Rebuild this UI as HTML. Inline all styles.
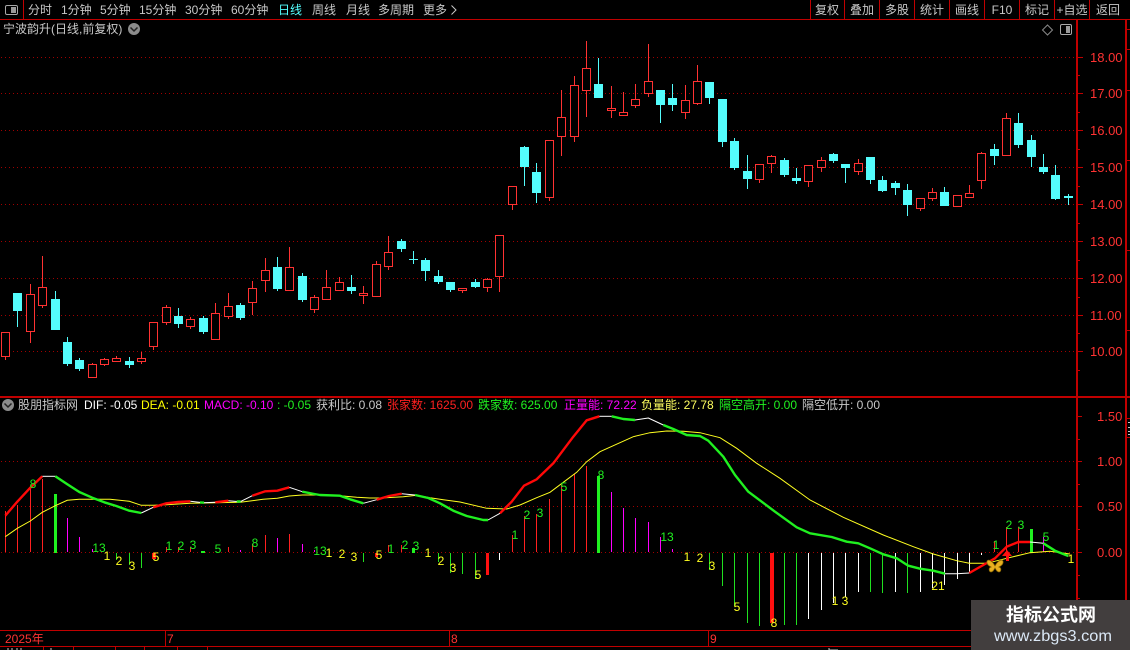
<!DOCTYPE html>
<html><head><meta charset="utf-8"><title>宁波韵升</title>
<style>
html,body{margin:0;padding:0;background:#000;width:1130px;height:650px;overflow:hidden}
svg{display:block}
text{font-family:"Liberation Sans","WenQuanYi Zen Hei","Noto Sans CJK SC",sans-serif;font-size:12px}
.n text{font-size:12px}
</style></head><body>
<svg xmlns="http://www.w3.org/2000/svg" width="1130" height="650" viewBox="0 0 1130 650">
<rect width="1130" height="650" fill="#000"/>
<!-- grid -->
<g stroke="#a00000" stroke-dasharray="1 3" fill="none" shape-rendering="crispEdges">
<path d="M1 57.5H1076M1 93.5H1076M1 130.5H1076M1 167.5H1076M1 204.5H1076M1 241.5H1076M1 278.5H1076M1 315.5H1076M1 351.5H1076M1 461.5H1076M1 506.5H1076M1 552.5H1076"/>
</g>
<!-- frame -->
<g fill="#c00000" shape-rendering="crispEdges">
<rect x="0" y="19" width="1130" height="1"/>
<rect x="23" y="0" width="1" height="19"/>
<rect x="810" y="0" width="1" height="19"/><rect x="844" y="0" width="1" height="19"/><rect x="879" y="0" width="1" height="19"/><rect x="914" y="0" width="1" height="19"/><rect x="949" y="0" width="1" height="19"/><rect x="984" y="0" width="1" height="19"/><rect x="1019" y="0" width="1" height="19"/><rect x="1054" y="0" width="1" height="19"/><rect x="1089" y="0" width="1" height="19"/>
<rect x="1076" y="20" width="2" height="610"/>
<rect x="1125" y="20" width="2" height="610"/>
<rect x="0" y="396" width="1130" height="2"/>
<rect x="0" y="630" width="1130" height="1"/>
<rect x="0" y="646" width="1130" height="1"/>
<rect x="165" y="631" width="1" height="15"/><rect x="449" y="631" width="1" height="15"/><rect x="708" y="631" width="1" height="15"/>
<rect x="43" y="647" width="1" height="3"/><rect x="73" y="647" width="1" height="3"/><rect x="115" y="647" width="1" height="3"/><rect x="144" y="647" width="1" height="3"/><rect x="177" y="647" width="1" height="3"/><rect x="207" y="647" width="1" height="3"/>
<!-- major ticks -->
<rect x="1078" y="57" width="5" height="1"/><rect x="1078" y="93" width="5" height="1"/><rect x="1078" y="130" width="5" height="1"/><rect x="1078" y="167" width="5" height="1"/><rect x="1078" y="204" width="5" height="1"/><rect x="1078" y="241" width="5" height="1"/><rect x="1078" y="278" width="5" height="1"/><rect x="1078" y="315" width="5" height="1"/><rect x="1078" y="351" width="5" height="1"/>
<rect x="1078" y="75" width="2" height="1"/><rect x="1078" y="112" width="2" height="1"/><rect x="1078" y="149" width="2" height="1"/><rect x="1078" y="186" width="2" height="1"/><rect x="1078" y="223" width="2" height="1"/><rect x="1078" y="260" width="2" height="1"/><rect x="1078" y="297" width="2" height="1"/><rect x="1078" y="333" width="2" height="1"/><rect x="1078" y="370" width="2" height="1"/>
<rect x="1078" y="416" width="4" height="1"/><rect x="1078" y="461" width="4" height="1"/><rect x="1078" y="506" width="4" height="1"/><rect x="1078" y="552" width="4" height="1"/>
<rect x="1078" y="439" width="2" height="1"/><rect x="1078" y="484" width="2" height="1"/><rect x="1078" y="529" width="2" height="1"/><rect x="1078" y="575" width="2" height="1"/><rect x="1078" y="598" width="2" height="1"/>
<rect x="1127" y="29" width="3" height="1"/><rect x="1127" y="49" width="3" height="1"/><rect x="1127" y="90" width="3" height="1"/><rect x="1127" y="160" width="3" height="1"/><rect x="1127" y="250" width="3" height="1"/><rect x="1127" y="330" width="3" height="1"/>
<rect x="1127" y="418" width="3" height="1"/><rect x="1127" y="437" width="3" height="1"/>
</g>
<g fill="#c8c8c8" shape-rendering="crispEdges"><rect x="1128" y="422" width="2" height="1"/><rect x="1128" y="427" width="2" height="1"/><rect x="1128" y="431" width="2" height="1"/><rect x="1128" y="434" width="2" height="1"/></g>

<!-- toolbar -->
<rect x="5.5" y="5.5" width="12" height="9" rx="1.5" fill="#000" stroke="#a8a8a8"/><rect x="11" y="7" width="5" height="6" fill="#9a9a9a"/>
<g fill="#c8c8c8">
<text x="28" y="14">分时</text><text x="61" y="14">1分钟</text><text x="100" y="14">5分钟</text><text x="139" y="14">15分钟</text><text x="185" y="14">30分钟</text><text x="231" y="14">60分钟</text>
<text x="278" y="14" fill="#54ffff">日线</text><text x="312" y="14">周线</text><text x="346" y="14">月线</text><text x="378" y="14">多周期</text><text x="423" y="14">更多</text>
</g>
<path d="M451.5 5.5L456 10L451.5 14.5" fill="none" stroke="#c8c8c8"/>
<g fill="#c8c8c8" text-anchor="middle">
<text x="827" y="14">复权</text><text x="862" y="14">叠加</text><text x="897" y="14">多股</text><text x="932" y="14">统计</text><text x="967" y="14">画线</text><text x="1002" y="14">F10</text><text x="1037" y="14">标记</text><text x="1072" y="14">+自选</text><text x="1108" y="14">返回</text>
</g>
<text x="3" y="33" fill="#c8c8c8">宁波韵升(日线,前复权)</text>
<circle cx="134" cy="29" r="6" fill="#8c8c8c"/><path d="M130.5 27.5L134 31L137.5 27.5" fill="none" stroke="#222" stroke-width="1.5"/>
<path d="M1047.5 25L1052.5 30L1047.5 35L1042.5 30Z" fill="none" stroke="#8a8a8a"/>
<rect x="1060.5" y="24.5" width="11" height="10" rx="1.5" fill="#000" stroke="#a8a8a8"/><rect x="1066" y="26" width="4" height="7" fill="#9a9a9a"/>

<!-- red candles -->
<g stroke="#ff3232" fill="none" shape-rendering="crispEdges">
<path d="M5.5 332V360M30.5 284V343M42.5 256V308M92.5 363V378M104.5 358V366M116.5 356V362M141.5 352V364M153.5 322V350M166.5 305V325M190.5 317V329M215.5 303V340M228.5 293V319M252.5 281V315M265.5 258V292M289.5 247V291M314.5 295V313M326.5 270V300M339.5 277V291M363.5 286V304M376.5 261V297M388.5 236V270M462.5 288V293M487.5 278V292M499.5 235V292M512.5 186V210M549.5 140V201M561.5 90V156M574.5 76V142M586.5 41V117M611.5 86V118M623.5 92V116M635.5 84V108M648.5 44V97M685.5 85V119M697.5 65V105M759.5 164V183M771.5 155V173M808.5 165V187M821.5 157V172M858.5 159V175M920.5 198V211M932.5 188V201M957.5 195V206M969.5 185V197M981.5 152V189M1006.5 113V155"/>
<path fill="#000" d="M1.5 332.5h8V356.5h-8zM26.5 294.5h8V331.5h-8zM38.5 287.5h8V305.5h-8zM88.5 364.5h8V377.5h-8zM100.5 359.5h8V364.5h-8zM112.5 358.5h8V361.5h-8zM137.5 358.5h8V361.5h-8zM149.5 322.5h8V346.5h-8zM162.5 307.5h8V322.5h-8zM186.5 319.5h8V326.5h-8zM211.5 313.5h8V339.5h-8zM224.5 306.5h8V316.5h-8zM248.5 288.5h8V302.5h-8zM261.5 270.5h8V280.5h-8zM285.5 267.5h8V290.5h-8zM310.5 297.5h8V309.5h-8zM322.5 287.5h8V299.5h-8zM335.5 282.5h8V290.5h-8zM359.5 293.5h8V295.5h-8zM372.5 264.5h8V296.5h-8zM384.5 252.5h8V266.5h-8zM458.5 288.5h8V290.5h-8zM483.5 279.5h8V287.5h-8zM495.5 235.5h8V276.5h-8zM508.5 186.5h8V204.5h-8zM545.5 140.5h8V197.5h-8zM557.5 117.5h8V136.5h-8zM570.5 85.5h8V136.5h-8zM582.5 68.5h8V90.5h-8zM607.5 108.5h8V110.5h-8zM619.5 112.5h8V115.5h-8zM631.5 99.5h8V105.5h-8zM644.5 81.5h8V93.5h-8zM681.5 100.5h8V112.5h-8zM693.5 81.5h8V103.5h-8zM755.5 164.5h8V179.5h-8zM767.5 156.5h8V163.5h-8zM804.5 165.5h8V181.5h-8zM817.5 160.5h8V167.5h-8zM854.5 163.5h8V171.5h-8zM916.5 198.5h8V208.5h-8zM928.5 192.5h8V198.5h-8zM953.5 195.5h8V206.5h-8zM965.5 193.5h8V197.5h-8zM977.5 153.5h8V180.5h-8zM1002.5 118.5h8V155.5h-8z"/>
</g>
<!-- cyan candles -->
<g stroke="#54fcfc" fill="none" shape-rendering="crispEdges">
<path d="M17.5 293V327M55.5 291V330M67.5 337V366M79.5 358V371M129.5 357V368M178.5 308V328M203.5 316V334M240.5 303V320M277.5 257V291M302.5 273V302M351.5 275V294M401.5 239V252M413.5 251V264M409 259.5H418M425.5 258V281M438.5 270V284M450.5 282V292M475.5 279V288M524.5 146V186M536.5 163V203M598.5 58V98M660.5 90V123M672.5 84V111M709.5 82V104M722.5 99V147M734.5 138V170M747.5 155V189M784.5 158V177M796.5 168V184M833.5 153V163M845.5 164V183M870.5 157V184M882.5 176V192M895.5 181V195M907.5 184V216M944.5 187V206M994.5 144V165M1018.5 113V148M1031.5 135V167M1043.5 154V174M1055.5 165V200M1068.5 194V205"/>
</g>
<path fill="#54fcfc" shape-rendering="crispEdges" d="M13 293h9V311h-9zM51 299h9V330h-9zM63 342h9V364h-9zM75 360h9V369h-9zM125 361h9V365h-9zM174 316h9V324h-9zM199 318h9V332h-9zM236 305h9V318h-9zM273 267h9V289h-9zM298 276h9V300h-9zM347 287h9V291h-9zM397 241h9V249h-9zM421 260h9V271h-9zM434 276h9V282h-9zM446 282h9V290h-9zM471 282h9V287h-9zM520 147h9V167h-9zM532 172h9V193h-9zM594 84h9V98h-9zM656 90h9V105h-9zM668 98h9V105h-9zM705 82h9V98h-9zM718 99h9V142h-9zM730 141h9V168h-9zM743 171h9V179h-9zM780 160h9V175h-9zM792 178h9V181h-9zM829 154h9V161h-9zM841 164h9V168h-9zM866 157h9V180h-9zM878 180h9V191h-9zM891 183h9V188h-9zM903 190h9V205h-9zM940 192h9V206h-9zM990 149h9V156h-9zM1014 123h9V145h-9zM1027 140h9V157h-9zM1039 167h9V172h-9zM1051 175h9V199h-9zM1064 196h9V198h-9z"/>
<!-- axis labels -->
<g fill="#ff3232">
<text style="font-size:13px" x="1090" y="62">18.00</text><text style="font-size:13px" x="1090" y="98">17.00</text><text style="font-size:13px" x="1090" y="135">16.00</text><text style="font-size:13px" x="1090" y="172">15.00</text><text style="font-size:13px" x="1090" y="209">14.00</text><text style="font-size:13px" x="1090" y="246">13.00</text><text style="font-size:13px" x="1090" y="283">12.00</text><text style="font-size:13px" x="1090" y="320">11.00</text><text style="font-size:13px" x="1090" y="356">10.00</text>
<text style="font-size:13px" x="1097" y="421">1.50</text><text style="font-size:13px" x="1097" y="466">1.00</text><text style="font-size:13px" x="1097" y="511">0.50</text><text style="font-size:13px" x="1097" y="557">0.00</text>
</g>

<!-- legend -->
<circle cx="8" cy="405" r="6" fill="#8c8c8c"/><path d="M4.5 403.5L8 407L11.5 403.5" fill="none" stroke="#222" stroke-width="1.5"/>
<text x="18" y="409" fill="#c8c8c8">股朋指标网</text>
<text x="84" y="409" fill="#fff">DIF: -0.05</text>
<text x="141" y="409" fill="#ffff00">DEA: -0.01</text>
<text x="204" y="409" fill="#ff00ff">MACD: -0.10</text>
<text x="277" y="409" fill="#20f020">: -0.05</text>
<text x="316" y="409" fill="#c8c8c8">获利比: 0.08</text>
<text x="387" y="409" fill="#ff2020">张家数: 1625.00</text>
<text x="478" y="409" fill="#20f020">跌家数: 625.00</text>
<text x="564" y="409" fill="#ff00ff">正量能: 72.22</text>
<text x="641" y="409" fill="#ffff60">负量能: 27.78</text>
<text x="719" y="409" fill="#20f020">隔空高开: 0.00</text>
<text x="802" y="409" fill="#c8c8c8">隔空低开: 0.00</text>

<!-- MACD bars -->
<g fill="none" shape-rendering="crispEdges">
<path stroke="#ff2020" d="M5.5 552V511M17.5 552V505M30.5 552V488M42.5 552V479M166.5 552V547M178.5 552V547M190.5 552V547M228.5 552V547M252.5 552V544M265.5 552V535M289.5 552V534M388.5 552V545M401.5 552V545M512.5 552V535M524.5 552V516M536.5 552V514M549.5 552V499M561.5 552V485M574.5 552V474M586.5 552V466M994.5 552V541M1006.5 552V527M1018.5 552V527"/>
<path stroke="#ff00ff" d="M67.5 552V518M79.5 552V537M92.5 552V549M240.5 552V550M277.5 552V538M302.5 552V544M314.5 552V550M611.5 552V492M623.5 552V508M635.5 552V518M648.5 552V522M660.5 552V537M672.5 552V549M1043.5 552V537"/>
<path stroke="#20e020" d="M116.5 553V560M129.5 553V565M141.5 553V568M363.5 553V562M438.5 553V562M450.5 553V573M462.5 553V574M475.5 553V579M709.5 553V570M722.5 553V586M734.5 553V606M747.5 553V623M759.5 553V626M784.5 553V625M796.5 553V625M870.5 553V592M882.5 553V593M907.5 553V593"/>
<path stroke="#fff" d="M499.5 553V560M808.5 553V619M821.5 553V610M833.5 553V603M845.5 553V597M858.5 553V592M895.5 553V592M920.5 553V592M932.5 553V588M944.5 553V585M957.5 553V579M969.5 553V573M981.5 553V555"/>
</g>
<g shape-rendering="crispEdges">
<g fill="#20f020"><rect x="54" y="494" width="3" height="59"/><rect x="201" y="551" width="4" height="2"/><rect x="412" y="548" width="3" height="5"/><rect x="597" y="476" width="3" height="77"/><rect x="1030" y="529" width="3" height="24"/></g>
<g fill="#ff1010"><rect x="152" y="553" width="4" height="6"/><rect x="375" y="553" width="3" height="4"/><rect x="486" y="553" width="3" height="22"/><rect x="770" y="553" width="4" height="70"/></g>
</g>

<!-- DEA -->
<polyline fill="none" stroke="#ffff20" stroke-width="1" points="5.3,536.7 17.3,528.3 30.3,521 42.3,512.3 55.3,505.7 67.3,500.3 79.3,499.3 110,499.3 129.3,501.3 141.3,505.3 153.3,505.3 166.3,504.7 190.3,503.3 215.3,502.7 240.3,502.3 263,499.3 277.3,498.3 289.3,496 302.3,495 320,495 340,495.7 356.7,497.3 370,498 380,498 403.3,496.7 416.7,495.3 430,497.7 443.3,499.7 460,502 486.7,508.3 506.7,509 520,505 536.7,497.7 550,492.3 563.3,482.3 576.7,472.3 586.7,461.7 600,451.7 613.3,445.7 633.3,436.7 650,432.7 666.7,431 683.3,431.3 700,432.7 720,437.7 736.7,448.3 756.7,463.3 780,478.3 810,500 843.3,517.3 883.3,535 913.3,546.7 933.3,554 956.7,560.7 969.3,563.3 986.7,563.3 1006.7,558.3 1030,552.7 1050,551.3 1070,554"/>
<!-- DIF -->
<g fill="none" stroke-linejoin="round">
<g stroke="#fff" stroke-width="1">
<polyline points="42.3,476.3 55.3,476.3"/><polyline points="141.3,513 153.3,507.3"/><polyline points="190.3,501.3 203.3,502.7 215.3,502.3"/><polyline points="228.3,500.7 240.3,501.7 252.3,495.7"/><polyline points="289.3,487.3 302.3,491.7"/><polyline points="363.3,503.3 376.7,499.7"/><polyline points="401.7,493.7 415,495"/><polyline points="488,520 500,513.3"/><polyline points="599.3,416.3 611.7,416.3"/><polyline points="635,420 648.3,418 663.3,425"/><polyline points="945,573.7 956.7,573.7 969.3,573"/><polyline points="1030,542 1043.3,543.3"/>
</g>
<g stroke="#ff0808" stroke-width="2.4">
<polyline points="5.3,515.7 17.3,501.7 30.3,487.7 42.3,476.3"/>
<polyline points="153.3,507.3 166.3,503.3 178.3,502 190.3,501.3"/>
<polyline points="215.3,502.3 228.3,500.7"/>
<polyline points="252.3,495.7 265.3,491.3 277.3,490.7 289.3,487.3"/>
<polyline points="376.7,499.7 389,496 401.7,493.7"/>
<polyline points="500,513.3 511.7,501.7 524,485.7 536.7,479.3 553.3,463.3 573.3,436.7 586.7,420.3 599.3,416.3"/>
<polyline points="969.3,573 983.3,565 995,558.3 1006.7,546.7 1018.3,542 1030,542"/>
</g>
<g stroke="#20f020" stroke-width="2.4">
<polyline points="55.3,476.3 67.3,484.3 79.3,492 92.3,497.7 104.3,502.3 116.3,506 129.3,510.7 141.3,513"/>
<polyline points="200,502.4 204,502.7"/><polyline points="236.7,501.4 240.7,501.5"/>
<polyline points="302.3,491.7 314.3,494 320,495 340,495.7 350,499.3 363.3,503.3"/>
<polyline points="415,495 428.3,498 440,503.3 453.3,510.7 466.7,516 483.3,520 488,520"/>
<polyline points="611.7,416.3 623.3,419 635,420"/>
<polyline points="663.3,425 673.3,429 686.7,435 700,436 708.3,440.7 723.3,456.7 735,475 748.3,491.7 761.7,501.7 775,511.7 796.7,527.3 810,533.3 831.7,537 846.7,541.7 858.3,543.3 870,548.3 883.3,554.3 896.7,558.3 908.3,565.7 920,568.7 933.3,570.7 945,573.7"/>
<polyline points="1043.3,543.3 1055,550.7 1068.3,556"/>
</g>
</g>
<!-- arrow + butterfly -->
<path d="M1007 550L1012 556H1009V561H1006V556H1002Z" fill="#ff1010"/>
<path d="M995 566C992 560 988 559 987 561C986 564 989 566 991 567C988 568 989 572 991 572C993 572 994 570 995 568C996 570 997 572 999 572C1001 572 1002 568 999 567C1001 566 1004 564 1003 561C1002 559 998 560 995 566Z" fill="#e8b020" stroke="#7a5a00" stroke-width=".7"/>
<!-- labels -->
<g class="n" text-anchor="middle">
<g fill="#20f020">
<text x="33" y="488">8</text><text x="99" y="552">13</text><text x="169" y="550">1</text><text x="181" y="550">2</text><text x="193" y="549">3</text><text x="218" y="553">5</text><text x="255" y="547">8</text><text x="320" y="555">13</text><text x="391" y="553">1</text><text x="405" y="549">2</text><text x="416" y="550">3</text><text x="515" y="539">1</text><text x="527" y="519">2</text><text x="540" y="517">3</text><text x="564" y="491">5</text><text x="601" y="479">8</text><text x="667" y="541">13</text><text x="996" y="549">1</text><text x="1009" y="529">2</text><text x="1021" y="529">3</text><text x="1046" y="541">5</text>
</g>
<g fill="#ffff20">
<text x="107" y="560">1</text><text x="119" y="565">2</text><text x="132" y="570">3</text><text x="156" y="561">5</text><text x="329" y="557">1</text><text x="342" y="558">2</text><text x="354" y="561">3</text><text x="379" y="559">5</text><text x="428" y="557">1</text><text x="441" y="565">2</text><text x="453" y="572">3</text><text x="478" y="579">5</text><text x="687" y="561">1</text><text x="700" y="562">2</text><text x="712" y="570">3</text><text x="737" y="611">5</text><text x="774" y="627">8</text><text x="840" y="605">1 3</text><text x="938" y="590">21</text><text x="1071" y="563">1</text>
</g>
</g>
<!-- date axis -->
<g fill="#ff3232"><text x="5" y="643">2025年</text><text x="167" y="643">7</text><text x="451" y="643">8</text><text x="710" y="643">9</text></g>
<g stroke="#c8c8c8" shape-rendering="crispEdges"><path d="M8 648V650M12 648V650M17 648V650M21 648V650M51 648V650M829 648V650H838"/></g>
<!-- watermark -->
<rect x="971" y="600" width="159" height="50" fill="#423e3e"/>
<text x="1051" y="621" text-anchor="middle" fill="#fff" style="font-size:18px;font-family:'Noto Sans CJK SC','WenQuanYi Zen Hei',sans-serif;font-weight:700">指标公式网</text>
<text x="994" y="641" fill="#dbe8f6" textLength="118" lengthAdjust="spacingAndGlyphs" style="font-size:16px">www.zbgs3.com</text>
</svg>
</body></html>
